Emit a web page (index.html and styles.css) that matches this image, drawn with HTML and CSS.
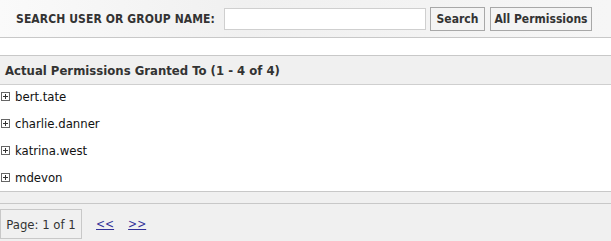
FILE: index.html
```html
<!DOCTYPE html>
<html>
<head>
<meta charset="utf-8">
<link rel="stylesheet" href="styles.css">
</head>
<body>
<div class="toolbar">
  <span class="label">SEARCH USER OR GROUP NAME:</span>
  <input class="search-input" type="text">
  <button class="btn btn-search">Search</button>
  <button class="btn btn-all">All Permissions</button>
</div>
<div class="spacer"></div>
<div class="header">Actual Permissions Granted To (1 - 4 of 4)</div>
<div class="list">
  <div class="row"><span class="plus"></span>bert.tate</div>
  <div class="row"><span class="plus"></span>charlie.danner</div>
  <div class="row"><span class="plus"></span>katrina.west</div>
  <div class="row"><span class="plus"></span>mdevon</div>
</div>
<div class="strip"></div>
<div class="footer">
  <span class="pagebox">Page: 1 of 1</span>
  <a class="nav" href="#">&lt;&lt;</a>
  <a class="nav" href="#">&gt;&gt;</a>
</div>
</body>
</html>
```
FILE: styles.css
```css
html, body {
  margin: 0;
  padding: 0;
  background: #f0f0f0;
  font-family: "DejaVu Sans Condensed", "DejaVu Sans", sans-serif;
  font-size: 12px;
  color: #222;
}
.toolbar {
  height: 37px;
  border-bottom: 1px solid #c8c8c8;
  background: linear-gradient(to right, #fafafa 0%, #f0f0f0 40%, #f6f6f6 100%);
  display: flex;
  align-items: center;
  padding-left: 16px;
}
.label {
  font-weight: bold;
  color: #333;
  font-size: 12px;
  width: 208px;
  letter-spacing: 0.1px;
  white-space: nowrap;
}
.search-input {
  width: 200px;
  height: 20px;
  border: 1px solid #cfcfcf;
  padding: 0;
  margin: 0 4px 0 0;
  box-sizing: content-box;
  background: #fff;
}
.btn {
  height: 24px;
  margin: 0 5px 0 0;
  padding: 0;
  border: 1px solid #a8a8a8;
  background: #f4f4f4;
  font-family: inherit;
  font-weight: bold;
  font-size: 12px;
  color: #333;
  box-sizing: border-box;
}
.btn-search {
  width: 55px;
}
.btn-all {
  width: 102px;
}
.spacer {
  height: 17px;
  background: #fff;
  border-bottom: 1px solid #c8c8c8;
}
.header {
  height: 28px;
  line-height: 30px;
  padding-left: 5px;
  font-weight: bold;
  font-size: 13px;
  color: #333;
  background: #f0f0f0;
  border-bottom: 1px solid #cfcfcf;
}
.list {
  background: #fff;
  height: 106px;
  overflow: hidden;
}
.row {
  height: 27px;
  padding-bottom: 5px;
  box-sizing: border-box;
  display: flex;
  align-items: center;
  padding-left: 1px;
  font-size: 13px;
  color: #111;
}
.plus {
  width: 7px;
  height: 7px;
  border: 1px solid #666;
  margin-right: 5px;
  position: relative;
  background: #fff;
}
.plus::before, .plus::after {
  content: "";
  position: absolute;
  background: #333;
}
.plus::before {
  left: 1px;
  top: 3px;
  width: 5px;
  height: 1px;
}
.plus::after {
  left: 3px;
  top: 1px;
  width: 1px;
  height: 5px;
}
.strip {
  height: 11px;
  border-top: 1px solid #c8c8c8;
  border-bottom: 1px solid #c8c8c8;
  background: #f0f0f0;
}
.footer {
  display: flex;
  align-items: center;
  padding-top: 5px;
}
.pagebox {
  width: 80px;
  height: 28px;
  border: 1px solid #c8c8c8;
  display: flex;
  align-items: center;
  justify-content: center;
  font-size: 13px;
  color: #333;
}
.nav {
  color: #333399;
  font-size: 12px;
  margin-left: 14px;
  text-decoration: underline;
}
```
